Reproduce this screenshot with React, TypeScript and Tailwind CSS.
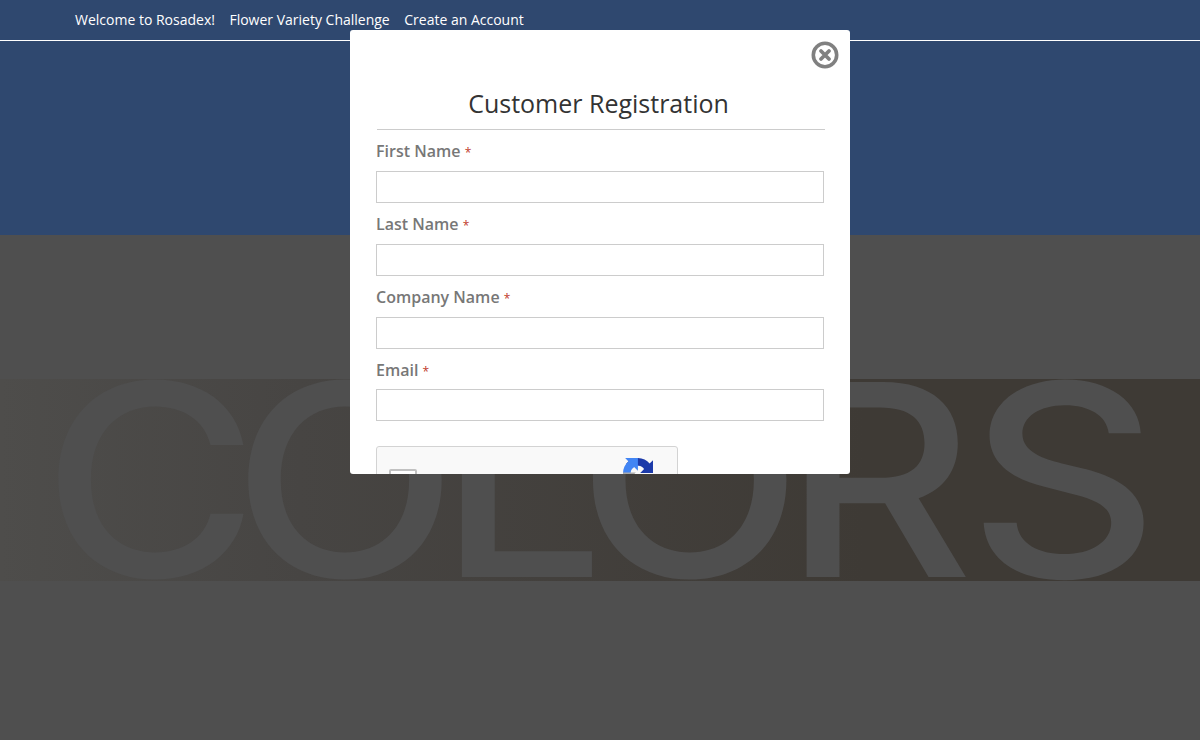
import React from 'react'

const navItems = ['Welcome to Rosadex!', 'Flower Variety Challenge', 'Create an Account']
const fields = ['First Name', 'Last Name', 'Company Name', 'Email']

const RecaptchaLogo: React.FC = () => (
  <svg viewBox="0 0 64 64" className="h-[30px] w-[30px] shrink-0">
    <path
      fill="#1c3aa9"
      d="M64 31.955l-.033-1.37V4.687l-7.16 7.16C50.948 4.674 42.033.093 32.05.093c-10.4 0-19.622 4.96-25.458 12.64l11.736 11.86a15.55 15.55 0 0 1 4.754-5.334c2.05-1.6 4.952-2.906 8.968-2.906.485 0 .86.057 1.135.163 4.976.393 9.29 3.14 11.83 7.124l-8.307 8.307 32.29.01"
    />
    <path
      fill="#4285f4"
      d="M31.862.094l-1.37.033H4.594l7.16 7.16C4.58 13.147 0 22.06 0 32.046c0 10.4 4.96 19.622 12.64 25.458l11.86-11.736a15.55 15.55 0 0 1-5.334-4.754c-1.6-2.05-2.906-4.952-2.906-8.968 0-.485.057-.86.163-1.135.393-4.976 3.14-9.29 7.124-11.83l8.307 8.307.01-32.29"
    />
    <path
      fill="#ababab"
      d="M.001 32l.033 1.37v25.898l7.16-7.16c5.86 7.173 14.774 11.754 24.76 11.754 10.4 0 19.622-4.96 25.458-12.64L45.676 38.364a15.55 15.55 0 0 1-4.754 5.334c-2.05 1.6-4.952 2.906-8.968 2.906-.485 0-.86-.057-1.135-.163-4.976-.393-9.29-3.14-11.83-7.124l8.307-8.307-32.29-.01"
    />
  </svg>
)

const CloseIcon: React.FC = () => (
  <svg viewBox="0 0 28 28" className="absolute top-[11px] right-[11px] h-7 w-7 text-[#808080]">
    <circle cx="14" cy="14" r="11.7" fill="none" stroke="currentColor" strokeWidth="3.6" />
    <path d="M10 10l8 8M18 10l-8 8" fill="none" stroke="currentColor" strokeWidth="3.8" strokeLinecap="round" />
  </svg>
)

const Field: React.FC<{ label: string }> = ({ label }) => (
  <div className="mb-[9.2px]">
    <label className="block h-6 text-base leading-6 font-semibold text-[#777]">
      {label} <span className="text-xs font-normal text-[#c0392b]">*</span>
    </label>
    <input type="text" className="mt-[7.6px] block h-8 w-[448px] border border-[#ccc] bg-white" />
  </div>
)

const App: React.FC = () => {
  return (
    <div className="relative h-[740px] w-[1200px] overflow-hidden bg-[#4f4f4f] font-['Open_Sans',sans-serif]">
      <header className="h-[235px] bg-[#2f486f]">
        <nav className="flex h-[41px] items-center gap-[14.5px] border-b border-white pl-[75px] text-sm text-white">
          {navItems.map((item) => (
            <span key={item}>{item}</span>
          ))}
        </nav>
      </header>

      <div className="mt-[144px] flex h-[202px] justify-center overflow-hidden bg-gradient-to-r from-[#4e4d4b] via-[#474543] via-25% to-[#3e3a35] to-72%">
        <span className="-translate-x-[9px] scale-x-[1.1] font-['Inter',sans-serif] text-[268px] leading-[202px] font-medium tracking-[-18px] whitespace-nowrap text-[#4f4f4f]">
          <span className="tracking-[-24px]">C</span>OLO<span className="tracking-[-5px]">R</span>S
        </span>
      </div>

      {/* modal */}
      <div className="absolute top-[30px] left-[350px] h-[444px] w-[500px] overflow-hidden rounded-[3px] bg-white">
        <CloseIcon />
        <div className="pt-[56px] pl-[26px]">
          <h2 className="ml-px w-[448px] border-b border-[#ccc] pr-[5px] pb-[8px] text-center text-[25px] leading-[35px] text-[#333]">
            Customer Registration
          </h2>
          <div className="mt-[9.4px]">
            {fields.map((field) => (
              <Field key={field} label={field} />
            ))}
          </div>
          <div className="mt-[24.6px] flex h-[76px] w-[302px] justify-between rounded-[3px] border border-[#d3d3d3] bg-[#f9f9f9] pt-[11px] pr-6 pl-3">
            <div className="mt-[11px] h-7 w-7 rounded-[2px] border-2 border-[#c1c1c1] bg-white" />
            <RecaptchaLogo />
          </div>
        </div>
      </div>
    </div>
  )
}

export default App
